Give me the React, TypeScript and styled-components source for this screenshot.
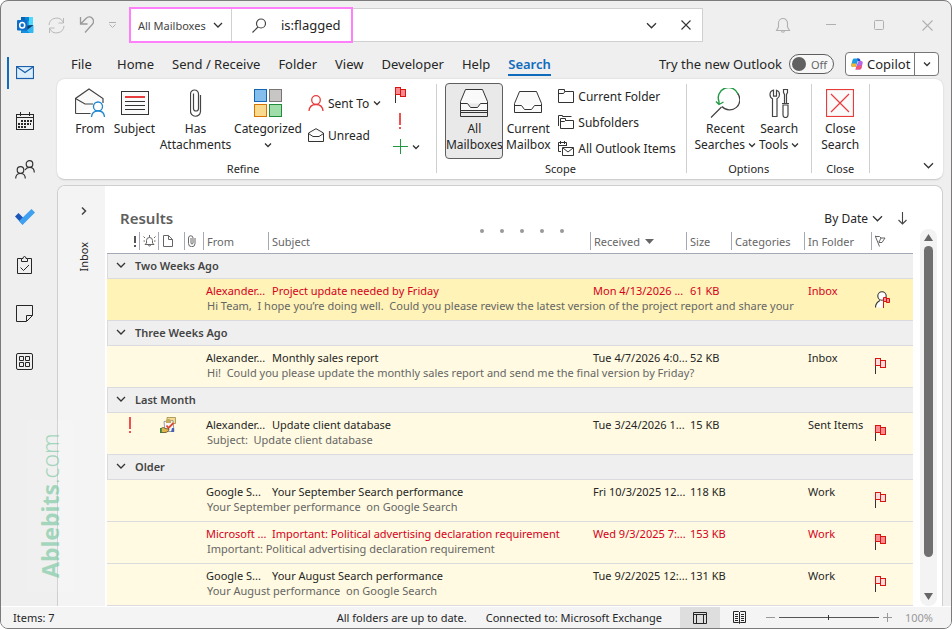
import React from "react";
import styled, { createGlobalStyle } from "styled-components";

const GlobalStyle = createGlobalStyle`
  * { box-sizing: border-box; }
  body {
    margin: 0;
    background: #fff;
    font-family: "Noto Sans", "Open Sans", sans-serif;
    font-size: 12px;
    color: #262626;
  }
  button, input, select { font: inherit; color: inherit; }
  button { background: none; border: 0; padding: 0; cursor: pointer; }
  svg { display: block; flex: none; }
`;

const Window = styled.div`
  position: relative;
  display: flex;
  flex-direction: column;
  min-height: 100vh;
  min-width: 900px;
  background: #efefef;
  border: 1px solid #7d7a7b;
  border-radius: 8px;
  overflow: hidden;
`;

/* ---------- title bar ---------- */

const TitleBar = styled.header`
  display: flex;
  align-items: center;
  height: 48px;
`;

const QuickAccess = styled.div`
  display: flex;
  align-items: center;
  gap: 14px;
  width: 128px;
  padding-left: 16px;
`;

const SearchBar = styled.div`
  flex: 1;
  display: flex;
  align-items: center;
  height: 34px;
  background: #fff;
  border: 1px solid #d0d0d0;
  border-left: 0;
`;

const Highlight = styled.div`
  display: flex;
  flex: none;
  width: 224px;
  height: 36px;
  border: 2px solid #ff80fa;
`;

const ScopePicker = styled.label`
  position: relative;
  display: flex;
  flex: none;
  align-items: center;
  border-right: 1px solid #d0d0d0;
  width: 101px;
  svg { position: absolute; right: 8px; pointer-events: none; }
`;

const ScopeSelect = styled.select`
  appearance: none;
  background: none;
  border: 0;
  outline: 0;
  width: 100%;
  height: 100%;
  padding: 0 0 0 7px;
  font-size: 11px;
  color: #444;
`;

const SearchField = styled.label`
  flex: 1;
  min-width: 0;
  display: flex;
  align-items: center;
  gap: 15px;
  padding-left: 20px;
`;

const SearchInput = styled.input`
  flex: 1;
  min-width: 0;
  border: 0;
  outline: 0;
  padding: 0;
  background: none;
  font-size: 13px;
`;

const SearchActions = styled.div`
  display: flex;
  align-items: center;
  gap: 24px;
  margin-left: auto;
  padding-right: 11px;
`;

const WindowButtons = styled.div`
  display: flex;
  margin-left: 56px;
`;

const WindowButton = styled.button`
  display: grid;
  place-items: center;
  width: 48px;
  height: 32px;
`;

/* ---------- frame ---------- */

const Frame = styled.div`
  flex: 1;
  display: flex;
`;

const Rail = styled.nav`
  display: flex;
  flex-direction: column;
  width: 56px;
  flex: none;
`;

const RailButton = styled.button<{ $active?: boolean }>`
  display: flex;
  align-items: center;
  justify-content: center;
  width: 47px;
  height: 48px;
  position: relative;
  &::before {
    content: "";
    display: ${(p) => (p.$active ? "block" : "none")};
    position: absolute;
    left: 6px;
    top: 8px;
    width: 2px;
    height: 32px;
    background: #0f6cbd;
  }
`;

const Main = styled.div`
  flex: 1;
  min-width: 0;
  display: flex;
  flex-direction: column;
  padding-right: 8px;
`;

/* ---------- tabs ---------- */

const TabRow = styled.div`
  display: flex;
  align-items: center;
  height: 30px;
  padding: 0 4px 0 14px;
`;

const Tabs = styled.nav`
  display: flex;
  gap: 18px;
`;

const Tab = styled.button<{ $active?: boolean }>`
  min-width: 28px;
  height: 24px;
  padding-top: 2px;
  text-align: left;
  font-size: 13px;
  font-weight: ${(p) => (p.$active ? 600 : 400)};
  color: ${(p) => (p.$active ? "#0f6cbd" : "#262626")};
  border-bottom: 2px solid ${(p) => (p.$active ? "#0f6cbd" : "transparent")};
`;

const NewOutlook = styled.label`
  display: flex;
  align-items: center;
  gap: 7px;
  margin-left: auto;
  font-size: 13px;
`;

const Switch = styled.span`
  display: flex;
  align-items: center;
  gap: 5px;
  width: 45px;
  height: 20px;
  padding-left: 2px;
  border: 1px solid #5f5f5f;
  border-radius: 10px;
  background: #f7f7f7;
  font-size: 11px;
  color: #666;
`;

const SwitchInput = styled.input`
  appearance: none;
  margin: 0;
  width: 14px;
  height: 14px;
  border-radius: 50%;
  background: #616161;
`;

const SplitButton = styled.div`
  display: flex;
  height: 24px;
  margin-left: 11px;
  background: #fff;
  border: 1px solid #777;
  border-radius: 4px;
`;

const CopilotButton = styled.button`
  display: flex;
  align-items: center;
  gap: 4px;
  width: 69px;
  padding-left: 5px;
  font-size: 13px;
  border-right: 1px solid #777;
`;

const SplitArrow = styled.button`
  display: grid;
  place-items: center;
  width: 23px;
`;

/* ---------- ribbon ---------- */

const Ribbon = styled.section`
  display: flex;
  padding: 4px 0 2px;
  background: #fff;
  border-radius: 8px;
  border-bottom: 1px solid #cfcfcf;
  box-shadow: 0 0 2px rgba(0, 0, 0, 0.15);
`;

const Group = styled.div<{ $pad: string }>`
  padding: ${(p) => p.$pad};
`;

const GroupBody = styled.div`
  display: flex;
  height: 76px;
`;

const GroupLabel = styled.div`
  margin-top: 2px;
  font-size: 11px;
  line-height: 16px;
  text-align: center;
`;

const Divider = styled.div`
  width: 1px;
  margin: 1px 0 4px;
  background: #cfcfcf;
`;

const BigButton = styled.button<{ $w: number; $pressed?: boolean }>`
  display: flex;
  flex-direction: column;
  align-items: center;
  gap: 3px;
  width: ${(p) => p.$w}px;
  padding-top: 4px;
  font-size: 12px;
  line-height: 16px;
  white-space: nowrap;
  border: 1px solid ${(p) => (p.$pressed ? "#5f5f5f" : "transparent")};
  border-radius: 4px;
  background: ${(p) => (p.$pressed ? "#e9e9e9" : "none")};
`;

const IconBox = styled.span`
  display: grid;
  place-items: center;
  height: 30px;
`;

const LabelLine = styled.span`
  display: flex;
  align-items: center;
  justify-content: center;
  gap: 3px;
`;

const ArrowLine = styled.span`
  display: grid;
  place-items: center;
  height: 16px;
`;

const SmallColumn = styled.div<{ $gap: number; $top?: number }>`
  display: flex;
  flex-direction: column;
  margin-left: ${(p) => p.$gap}px;
  padding-top: ${(p) => p.$top ?? 0}px;
`;

const SmallButton = styled.button<{ $h: number }>`
  display: flex;
  flex: none;
  align-items: center;
  gap: 4px;
  height: ${(p) => p.$h}px;
  font-size: 12px;
  white-space: nowrap;
`;

const MarkBox = styled.span`
  display: flex;
  justify-content: center;
  width: 15px;
`;

const RibbonToggle = styled.button`
  align-self: flex-end;
  margin-left: auto;
  padding: 6px 9px;
`;

/* ---------- results ---------- */

const Card = styled.section`
  flex: 1;
  display: flex;
  margin-top: 5px;
  background: #fff;
  border: 1px solid #cfcfcf;
  border-bottom: 0;
  border-radius: 8px 8px 0 0;
  overflow: hidden;
`;

const FolderStrip = styled.aside`
  display: flex;
  flex-direction: column;
  align-items: center;
  gap: 26px;
  width: 47px;
  padding: 20px 0 0 5px;
  background: #f4f4f4;
`;

const VerticalLabel = styled.span`
  writing-mode: vertical-rl;
  transform: rotate(180deg);
  font-size: 11px;
  line-height: 16px;
`;

const Pane = styled.div`
  position: relative;
  flex: 1;
  min-width: 0;
  display: flex;
  flex-direction: column;
  padding: 21px 5px 0 2px;
`;

const PaneHeader = styled.div`
  display: flex;
  align-items: center;
  height: 22px;
  padding: 0 30px 0 13px;
`;

const Title = styled.h1`
  margin: 0;
  font-size: 15px;
  line-height: 20px;
  font-weight: 600;
  color: #5f5f5f;
`;

const SortBy = styled.button`
  display: flex;
  align-items: center;
  gap: 4px;
  margin-left: auto;
`;

const SortOrder = styled.button`
  margin-left: 15px;
`;

const Dots = styled.div`
  position: absolute;
  top: 43px;
  left: 0;
  right: 4px;
  display: flex;
  justify-content: center;
  gap: 16px;
`;

const Dot = styled.span`
  width: 4px;
  height: 4px;
  border-radius: 50%;
  background: #999;
`;

const PaneBody = styled.div`
  flex: 1;
  display: flex;
  gap: 7px;
`;

const TableWrap = styled.div`
  flex: 1;
  min-width: 0;
  padding-top: 3px;
`;

const Table = styled.table`
  width: 100%;
  table-layout: fixed;
  border-collapse: separate;
  border-spacing: 0;
  font-size: 11px;
  line-height: 15px;
`;

const Col = styled.col<{ $w?: number }>`
  width: ${(p) => (p.$w ? p.$w + "px" : "auto")};
`;

const HeadCell = styled.th`
  height: 22px;
  padding: 0 0 3px;
  font-weight: 400;
  text-align: left;
  color: #666;
  border-bottom: 1px solid #a5a8b5;
`;

const HeadInner = styled.div<{ $first?: boolean }>`
  display: flex;
  align-items: center;
  justify-content: ${(p) => (p.$first ? "flex-end" : "flex-start")};
  gap: 5px;
  height: 18px;
  padding: 0 3px;
  white-space: nowrap;
  border-left: 1px solid ${(p) => (p.$first ? "transparent" : "#a5a8b5")};
`;

const Inset = styled.span`
  padding-left: 1px;
`;

const GroupCell = styled.th`
  height: 25px;
  padding: 0 0 2px 8px;
  text-align: left;
  font-weight: 600;
  color: #444;
  background: #efefef;
  border-left: 1px solid #dadbdf;
  border-bottom: 1px solid #dadbdf;
`;

const GroupTitle = styled.button`
  display: flex;
  align-items: center;
  gap: 9px;
  font-weight: 600;
`;

const TopRow = styled.tr<{ $tone: Tone }>`
  background: ${(p) => (p.$tone === "selected" ? "#fff3b7" : "#fffae1")};
  color: ${(p) => (p.$tone === "normal" ? "#262626" : "#d6001c")};
`;

const PreviewRow = styled.tr<{ $tone: Tone }>`
  background: ${(p) => (p.$tone === "selected" ? "#fff3b7" : "#fffae1")};
  color: #666;
`;

const Cell = styled.td<{ $indent?: boolean }>`
  height: 19px;
  padding: 4px 0 0 ${(p) => (p.$indent ? 4 : 3)}px;
  white-space: nowrap;
`;

const IconCell = styled.td`
  padding: 4px 0 0 2px;
  vertical-align: top;
  border-bottom: 1px solid #dadbdf;
`;

const FlagCell = styled.td`
  padding: 0 0 1px 4px;
  vertical-align: middle;
  border-bottom: 1px solid #dadbdf;
`;

const PreviewCell = styled.td`
  height: 23px;
  padding: 0 0 7px 4px;
  white-space: pre;
  border-bottom: 1px solid #dadbdf;
`;

const ImportantMark = styled.div`
  padding-left: 20px;
`;

const ScrollTrack = styled.div`
  display: flex;
  flex-direction: column;
  align-items: center;
  width: 17px;
  padding: 5px 0;
  border-radius: 8px;
  background: #f3f3f3;
`;

const ScrollThumb = styled.div`
  flex: 312;
  width: 9px;
  margin-top: 4px;
  border-radius: 5px;
  background: #707070;
`;

const ScrollSpace = styled.div`
  flex: 36;
`;

/* ---------- status bar ---------- */

const StatusBar = styled.footer`
  display: flex;
  align-items: center;
  height: 22px;
  padding: 0 18px 0 12px;
  background: #f4f4f4;
  border-top: 1px solid #fff;
  font-size: 11px;
`;

const StatusText = styled.span<{ $gap: number }>`
  margin-right: ${(p) => p.$gap}px;
`;

const Spacer = styled.div`
  flex: 1;
`;

const ViewButton = styled.button<{ $active?: boolean }>`
  display: grid;
  place-items: center;
  width: 40px;
  height: 21px;
  background: ${(p) => (p.$active ? "#dedede" : "none")};
`;

const ZoomControl = styled.div`
  display: flex;
  align-items: center;
  gap: 4px;
  margin-left: 6px;
  color: #999;
`;

const ZoomRange = styled.input`
  appearance: none;
  width: 100px;
  height: 9px;
  margin: 0;
  background: linear-gradient(#555, #555) center / 100% 1px no-repeat;
  &::-webkit-slider-thumb {
    appearance: none;
    width: 1px;
    height: 5px;
    background: #333;
  }
`;

const ZoomValue = styled.span`
  margin-left: 9px;
`;

/* ---------- watermark ---------- */

const Watermark = styled.div`
  position: absolute;
  left: 26px;
  bottom: 36px;
  width: 46px;
  height: 172px;
  display: flex;
  align-items: center;
  justify-content: center;
  writing-mode: vertical-rl;
  transform: rotate(180deg);
  background: rgba(255, 255, 255, 0.1);
  color: rgba(110, 196, 154, 0.6);
  font-size: 23px;
  font-weight: 300;
  pointer-events: none;
`;

const WatermarkBold = styled.b`
  font-weight: 700;
`;

/* ---------- icons ---------- */

const Svg = ({ w, h, s = "#444", children }: { w: number; h: number; s?: string; children: React.ReactNode }) => (
  <svg width={w} height={h} viewBox={`0 0 ${w} ${h}`} fill="none" stroke={s} aria-hidden="true">
    {children}
  </svg>
);

const Chevron = ({ w = 10, color = "#333" }: { w?: number; color?: string }) => (
  <Svg w={w} h={w} s={color}>
    <path d={`M1 ${w / 2 - (w - 2) / 4}l${(w - 2) / 2} ${(w - 2) / 2} ${(w - 2) / 2}-${(w - 2) / 2}`} strokeWidth="1.3" />
  </Svg>
);

const OutlookLogo = () => (
  <Svg w={17} h={17} s="none">
    <path d="M4 0h12v9H4z" fill="#28a8ea" />
    <path d="M4 0h4v4H4z" fill="#0364b8" />
    <path d="M8 0h4v4H8z" fill="#0a84d4" />
    <path d="M12 0h4v8h-4z" fill="#50d9ff" />
    <path d="M4 9l12-1v8H4z" fill="#123b6d" />
    <path d="M16.500 8v7a1 1 0 0 1-1 1H6z" fill="#35b8f1" />
    <path d="M4 9l9 7H5a1 1 0 0 1-1-1z" fill="#1490df" />
    <rect y="3" width="10.500" height="10.500" rx="1" fill="#0f6fc8" />
    <ellipse cx="5.200" cy="8.300" rx="2.500" ry="2.800" stroke="#fff" strokeWidth="1.500" />
  </Svg>
);

const SyncIcon = () => (
  <Svg w={17} h={17} s="#b8b8b8">
    <path d="M1 8a7.500 7.500 0 0 1 14.300-2.500M16 9a7.500 7.500 0 0 1-14.300 2.500" />
    <path d="M15.500 1v5h-5M1.500 16v-5h5" />
  </Svg>
);

const UndoIcon = () => (
  <Svg w={15} h={18} s="#999">
    <path d="M1.500 1v7h7M1.500 8L7 2.500c2-2 4.500-2 6.200-.3 1.800 1.800 1.800 4.500 0 6.300L6 16.500" strokeWidth="1.300" />
  </Svg>
);

const OverflowIcon = () => (
  <Svg w={9} h={8} s="#b0b0b0">
    <path d="M1 1.500h7M1.500 3.500l3 3 3-3" />
  </Svg>
);

const SearchIcon = () => (
  <Svg w={14} h={15}>
    <circle cx="9" cy="5.500" r="4.500" strokeWidth="1.200" />
    <path d="M6 9L.500 14.500" strokeWidth="1.200" />
  </Svg>
);

const CloseIcon = ({ w = 10, color = "#333" }: { w?: number; color?: string }) => (
  <Svg w={w} h={w} s={color}>
    <path d={`M.5 .5L${w - 0.5} ${w - 0.5}M${w - 0.5} .5L.5 ${w - 0.5}`} strokeWidth="1.100" />
  </Svg>
);

const BellIcon = () => (
  <Svg w={16} h={17} s="#b0b0b0">
    <path d="M3.500 10V6a4.500 4.500 0 0 1 9 0v4l2 3.500h-13zM6.500 13.500a1.500 1.800 0 0 0 3 0" strokeWidth="1.100" />
  </Svg>
);

const MinimizeIcon = () => (
  <Svg w={10} h={10} s="#b0b0b0"><path d="M0 4.500h10" /></Svg>
);

const MaximizeIcon = () => (
  <Svg w={10} h={10} s="#b0b0b0"><rect x=".5" y=".5" width="9" height="9" rx="1" /></Svg>
);

const MailIcon = () => (
  <Svg w={18} h={14} s="#1a5fa8">
    <rect x=".5" y=".5" width="17" height="12" fill="#dcedfb" strokeWidth="1.200" />
    <path d="M1 1l8 5.500L17 1" strokeWidth="1.200" />
  </Svg>
);

const CalendarIcon = () => (
  <Svg w={18} h={18} s="#262626">
    <rect x=".5" y="2.500" width="17" height="15" />
    <path d="M0 5.500h18M4.500 0v4M13.500 0v4" />
    <path d="M5 9h11M2 12h13M2 15h8" strokeWidth="2" strokeDasharray="2 1" />
  </Svg>
);

const PeopleIcon = () => (
  <Svg w={20} h={19} s="#333">
    <circle cx="5.500" cy="10" r="3.300" strokeWidth="1.200" />
    <path d="M.7 18.500c0-3 2-5 4.800-5s4.800 2 4.800 5" strokeWidth="1.200" />
    <circle cx="14.500" cy="4" r="3.300" strokeWidth="1.200" />
    <path d="M10 10c1-1.700 2.600-2.600 4.500-2.600 2.800 0 4.800 2 4.800 5" strokeWidth="1.200" />
  </Svg>
);

const TodoIcon = () => (
  <Svg w={20} h={16} s="none">
    <path d="M0 7.500L3.500 4 11 11.500 7.500 15.500z" fill="#1b56b8" />
    <path d="M4 12L16.500 0 20 3.500 7.500 16z" fill="#3fa0f0" />
  </Svg>
);

const ClipboardIcon = () => (
  <Svg w={15} h={18} s="#262626">
    <path d="M4.500 2.500h-4v15h14v-15h-4" />
    <path d="M4.500 5.500v-3h1.500a1.500 2 0 0 1 3 0h1.500v3zM3.500 11.500l3 3 5.500-5.500" />
  </Svg>
);

const NoteIcon = () => (
  <Svg w={17} h={17} s="#262626">
    <path d="M.5.5h16v10l-6 6H.500zM10.500 16v-5.500h6" />
  </Svg>
);

const AppsIcon = () => (
  <Svg w={17} h={17} s="#262626">
    <rect x=".5" y=".5" width="16" height="16" rx="1.500" />
    <path d="M3.500 3.500h4v4h-4zM9.500 3.500h4v4h-4zM3.500 9.500h4v4h-4zM9.500 9.500h4v4h-4z" />
  </Svg>
);

const CopilotLogo = () => (
  <svg width="12" height="12" viewBox="0 0 12 12" aria-hidden="true">
    <path d="M3.500.5h4L6 5.500 4.500 9H2C.500 9 0 8 .4 6.500l1-4C1.800 1 2.500.5 3.500.5z" fill="#1c9be0" />
    <path d="M.3 5.500h5L4.500 9H2C.500 9 0 8 .3 5.500z" fill="#f4b731" />
    <path d="M6 .5h1.500c1 0 1.500.7 1.800 1.700L9.500 3H7z" fill="#1c4bc4" />
    <path d="M8.500 11.500h-4L6 6.500 7.500 3H10c1.500 0 2 1 1.600 2.500l-1 4c-.4 1.500-1.100 2-2.100 2z" fill="#b565e6" />
    <path d="M11 7.500H5.700L4.500 11.500h4c1 0 1.700-.5 2.100-2z" fill="#f2577a" />
  </svg>
);

const FromIcon = () => (
  <Svg w={30} h={30} s="#444">
    <path d="M.5 25.500v-15L14 1l14 9.500V15M.5 25.500h15" strokeWidth="1.200" fill="#fafafa" />
    <path d="M.5 10.500l9.500 5.500h8" strokeWidth="1.200" />
    <circle cx="23" cy="18.500" r="4.500" stroke="#1f87cf" strokeWidth="1.300" fill="#fff" />
    <path d="M16.500 29c.3-3.700 2.700-6 6.500-6s6.200 2.300 6.500 6" stroke="#1f87cf" strokeWidth="1.300" fill="#fff" />
  </Svg>
);

const SubjectIcon = () => (
  <Svg w={28} h={28} s="#333">
    <rect x=".5" y="2.500" width="27" height="23" fill="#fafafa" />
    <path d="M4 8h20" stroke="#e83c3c" strokeWidth="2" />
    <path d="M4 12.500h20M4 16.500h20M4 20.500h20" />
  </Svg>
);

const ClipIcon = () => (
  <Svg w={12} h={29} s="#444">
    <path d="M8.500 6v13.500a2 2 0 0 1-5 0M3.500 20V4.500M8.500 6V5a4 4 0 0 0-8 0v17a5 5 0 0 0 10 .5V6M3.500 5v-.500" strokeWidth="1.200" />
  </Svg>
);

const CategoriesIcon = () => (
  <Svg w={28} h={28}>
    <rect x=".5" y=".5" width="12" height="12" fill="#83beec" stroke="#1464b4" />
    <rect x="15.500" y=".5" width="12" height="12" fill="#c8c6c4" stroke="#7a7574" />
    <rect x=".5" y="15.500" width="12" height="12" fill="#f8db8f" stroke="#d87300" />
    <rect x="15.500" y="15.500" width="12" height="12" fill="#a1dda8" stroke="#1f8b3b" />
  </Svg>
);

const PersonIcon = () => (
  <Svg w={16} h={16} s="#e83c3c">
    <circle cx="8" cy="5" r="4.300" strokeWidth="1.300" />
    <path d="M1 16c.3-4 3-6.500 7-6.500s6.700 2.500 7 6.500" strokeWidth="1.300" />
  </Svg>
);

const UnreadIcon = () => (
  <Svg w={16} h={14} s="#333">
    <path d="M.5 13.500v-8.500L8 .7 15.500 5v8.500zM.5 5.500l4.500 3h6l4.500-3" fill="#fafafa" />
  </Svg>
);

const FlagIcon = ({ strong = true }: { strong?: boolean }) => (
  <Svg w={11} h={16} s="#d9150f">
    <path d="M.5 7v9" stroke="#333" />
    <rect x="5.500" y="2.500" width="5" height="7" fill={strong ? "#f98b90" : "#fbdcdc"} />
    <rect x=".5" y=".5" width="5" height="7" fill={strong ? "#f98b90" : "#fbdcdc"} />
  </Svg>
);

const ImportanceIcon = () => (
  <Svg w={3} h={16} s="#f05050">
    <path d="M1 0v12M1 14v2" strokeWidth="2" />
  </Svg>
);

const PlusIcon = () => (
  <Svg w={15} h={15} s="#1f9a43"><path d="M0 7.500h15M7.500 0v15" /></Svg>
);

const TrayIcon = ({ stacked = false }: { stacked?: boolean }) => (
  <Svg w={28} h={28} s="#333">
    <path d="M.5 23.500v-9L5.500 2.500h17l5 12v9zM.5 16.500h7l3 4h7l3-4h7" fill="#fafafa" transform={stacked ? "translate(0 -2)" : undefined} />
    {stacked && <path d="M.5 21v6.500h27V21M.5 23.500h27" />}
  </Svg>
);

const FolderIcon = () => (
  <Svg w={16} h={14} s="#333"><path d="M.5.5h6v2h9v11H.500zM.5 4.500h5l1.500-2" /></Svg>
);

const SubfoldersIcon = () => (
  <Svg w={16} h={14} s="#333">
    <path d="M.5 11V.5h4v1h9M2.500 3.500h5v2h8v8h-13zM2.500 6.500h4l1-1" />
  </Svg>
);

const ItemsIcon = () => (
  <Svg w={16} h={15} s="#333">
    <path d="M2.500 0v3M6.500 0v3M8.500 5V1.500h-8v9H3M.5 4.500h8" />
    <path d="M4.500 6.500h11v8h-11zM5 7l5 4 5-4" fill="#fff" />
  </Svg>
);

const RecentIcon = () => (
  <Svg w={30} h={30} s="#444">
    <path d="M27.300 5A10 10 0 1 1 12 18.500M11.500 19L1 29.500" strokeWidth="1.200" />
    <path d="M28 6A10 10 0 0 0 9 13.500V16M6 13.500l3 3 4.500-2.500" stroke="#1f9a43" strokeWidth="1.400" />
  </Svg>
);

const ToolsIcon = () => (
  <Svg w={20} h={29} s="#444">
    <path d="M4.500 1.200v6h3v-6c2 .6 3 2.300 3 4.300 0 2.300-1.200 3.500-2.500 4.200v17.800H3.500V9.700C2 9 1 7.800 1 5.500c0-2 1.300-3.700 3.500-4.300z" strokeWidth="1.200" />
    <path d="M14.500.5h4v3l-1 2v9h-2v-9l-1-2zM13 14.500h7M14 16v10a2.500 2.500 0 0 0 5 0V16z" strokeWidth="1.200" />
  </Svg>
);

const CloseSearchIcon = () => (
  <Svg w={28} h={28} s="#e83c3c">
    <rect x=".5" y=".5" width="27" height="27" fill="#fafafa" strokeWidth="1.200" />
    <path d="M5 5l18 18M23 5L5 23" strokeWidth="1.200" />
  </Svg>
);

const ReminderIcon = () => (
  <Svg w={13} h={12} s="#666">
    <path d="M3.500 8V5.500a3 3 0 0 1 6 0V8l1.500 1.500H2zM5.500 10a1 1 0 0 0 2 0M6.500 0v2.500M2 3L.500 1.500M11 3l1.500-1.500M2 6H.500M11 6h1.500" />
  </Svg>
);

const PageIcon = () => (
  <Svg w={10} h={12} s="#666"><path d="M.5.5h5l4 4v7H.500zM5.500.5v4h4" /></Svg>
);

const SmallClip = () => (
  <Svg w={8} h={12} s="#666">
    <path d="M3 3v5a1 1 0 0 0 2 0V3a2.200 2.200 0 0 0-4.500 0v5.500a3 3 0 0 0 6.500 0V3" />
  </Svg>
);

const HeaderFlag = () => (
  <Svg w={11} h={12} s="#666"><path d="M0 .5L4.500 11.500M.5 1.500h4l1.500 1.500h4L7 7.500H4L3 6.500M6 3L4 7" /></Svg>
);

const TaskIcon = () => (
  <Svg w={16} h={16} s="none">
    <path d="M7 .5h8.500v6H7z" fill="#f1dc93" stroke="#a08a48" strokeWidth=".8" />
    <path d="M4 4.500l9-1 1 11H5z" fill="#f6f6fb" stroke="#85858f" strokeWidth=".8" />
    <path d="M6 3.500c1-2 4-2 5 0v2.500H6z" fill="#c5aa58" />
    <path d="M6.500 8.500l2 2.500 5-5" stroke="#e0482c" strokeWidth="1.800" />
    <path d="M1 11.500c2-1.500 3-1 4 0l4 .5c0 2-2 3.500-4 3.500H1z" fill="#e2b64d" stroke="#5a4920" strokeWidth=".8" />
    <path d="M0 11h1.500v5H0z" fill="#2b8a46" />
    <path d="M12 11h2v4h-3z" fill="#4563b4" />
  </Svg>
);

const PersonFlag = () => (
  <Svg w={16} h={17} s="#333">
    <path d="M.5 16.500c0-3 1.500-5.500 4.500-7h4v7z" fill="#fff" stroke="none" />
    <circle cx="7" cy="5" r="4.200" fill="#fff" strokeWidth="1.100" />
    <path d="M.5 16.500c0-3 1.500-5.500 4.500-7" strokeWidth="1.100" />
    <path d="M8.500 7v10" stroke="#d9150f" />
    <path d="M8.500 6.500h3v4h-3zM11.500 7.500h3v4h-3z" fill="#f98b90" stroke="#d9150f" />
  </Svg>
);

/* ---------- data ---------- */

type Tone = "selected" | "overdue" | "normal";

interface Message {
  from: string;
  subject: string;
  preview: string;
  received: string;
  size: string;
  folder: string;
  tone: Tone;
  flag: "person" | "strong" | "light";
  important?: boolean;
}

const groups: { title: string; messages: Message[] }[] = [
  {
    title: "Two Weeks Ago",
    messages: [
      {
        from: "Alexander...", subject: "Project update needed by Friday",
        preview: "Hi Team,  I hope you’re doing well.  Could you please review the latest version of the project report and share your",
        received: "Mon 4/13/2026 ...", size: "61 KB", folder: "Inbox", tone: "selected", flag: "person",
      },
    ],
  },
  {
    title: "Three Weeks Ago",
    messages: [
      {
        from: "Alexander...", subject: "Monthly sales report",
        preview: "Hi!  Could you please update the monthly sales report and send me the final version by Friday?",
        received: "Tue 4/7/2026 4:0...", size: "52 KB", folder: "Inbox", tone: "normal", flag: "light",
      },
    ],
  },
  {
    title: "Last Month",
    messages: [
      {
        from: "Alexander...", subject: "Update client database",
        preview: "Subject:  Update client database",
        received: "Tue 3/24/2026 1...", size: "15 KB", folder: "Sent Items", tone: "normal", flag: "strong", important: true,
      },
    ],
  },
  {
    title: "Older",
    messages: [
      {
        from: "Google S...", subject: "Your September Search performance",
        preview: "Your September performance  on Google Search",
        received: "Fri 10/3/2025 12...", size: "118 KB", folder: "Work", tone: "normal", flag: "light",
      },
      {
        from: "Microsoft ...", subject: "Important: Political advertising declaration requirement",
        preview: "Important: Political advertising declaration requirement",
        received: "Wed 9/3/2025 7:...", size: "153 KB", folder: "Work", tone: "overdue", flag: "strong",
      },
      {
        from: "Google S...", subject: "Your August Search performance",
        preview: "Your August performance  on Google Search",
        received: "Tue 9/2/2025 12:...", size: "131 KB", folder: "Work", tone: "normal", flag: "light",
      },
    ],
  },
];

const tabs = ["File", "Home", "Send / Receive", "Folder", "View", "Developer", "Help", "Search"];

const railItems: [string, React.ReactNode][] = [
  ["Mail", <MailIcon />],
  ["Calendar", <CalendarIcon />],
  ["People", <PeopleIcon />],
  ["To Do", <TodoIcon />],
  ["Tasks", <ClipboardIcon />],
  ["Notes", <NoteIcon />],
  ["More apps", <AppsIcon />],
];

/* ---------- sections ---------- */

interface BigProps {
  w: number;
  icon: React.ReactNode;
  lines: string[];
  arrow?: boolean;
  pressed?: boolean;
}

const Big = ({ w, icon, lines, arrow, pressed }: BigProps) => (
  <BigButton $w={w} $pressed={pressed} aria-pressed={pressed}>
    <IconBox>{icon}</IconBox>
    <span>
      {lines.map((line, i) => (
        <LabelLine key={line}>
          {line}
          {arrow && i === 1 && <Chevron w={8} />}
        </LabelLine>
      ))}
      {arrow && lines.length === 1 && <ArrowLine><Chevron w={8} /></ArrowLine>}
    </span>
  </BigButton>
);

const MessageRows = ({ m }: { m: Message }) => (
  <>
    <TopRow $tone={m.tone}>
      <IconCell rowSpan={2} colSpan={2}>
        {m.important && <ImportantMark><ImportanceIcon /></ImportantMark>}
      </IconCell>
      <IconCell rowSpan={2} colSpan={2}>{m.important && <TaskIcon />}</IconCell>
      <Cell>{m.from}</Cell>
      <Cell $indent>{m.subject}</Cell>
      <Cell>{m.received}</Cell>
      <Cell $indent>{m.size}</Cell>
      <Cell />
      <Cell $indent>{m.folder}</Cell>
      <FlagCell rowSpan={2}>
        {m.flag === "person" ? <PersonFlag /> : <FlagIcon strong={m.flag === "strong"} />}
      </FlagCell>
    </TopRow>
    <PreviewRow $tone={m.tone}>
      <PreviewCell colSpan={6}>{m.preview}</PreviewCell>
    </PreviewRow>
  </>
);

const Results = () => (
  <Pane>
    <PaneHeader>
      <Title>Results</Title>
      <SortBy>By Date <Chevron w={11} /></SortBy>
      <SortOrder aria-label="Reverse order">
        <Svg w={9} h={13}><path d="M4.500 0v12M.5 8l4 4 4-4" strokeWidth="1.100" /></Svg>
      </SortOrder>
    </PaneHeader>
    <Dots>{[0, 1, 2, 3, 4].map((n) => <Dot key={n} />)}</Dots>
    <PaneBody>
      <TableWrap>
        <Table>
          <colgroup>
            <Col $w={32} /><Col $w={19} /><Col $w={26} /><Col $w={19} /><Col $w={65} /><Col />
            <Col $w={96} /><Col $w={45} /><Col $w={73} /><Col $w={67} /><Col $w={42} />
          </colgroup>
          <thead>
            <tr>
              <HeadCell aria-label="Importance">
                <HeadInner $first><Svg w={2} h={11} s="#555"><path d="M1 0v7M1 9v2" strokeWidth="2" /></Svg></HeadInner>
              </HeadCell>
              <HeadCell aria-label="Reminder"><HeadInner><ReminderIcon /></HeadInner></HeadCell>
              <HeadCell aria-label="Icon"><HeadInner><Inset><PageIcon /></Inset></HeadInner></HeadCell>
              <HeadCell aria-label="Attachment"><HeadInner><SmallClip /></HeadInner></HeadCell>
              <HeadCell><HeadInner>From</HeadInner></HeadCell>
              <HeadCell><HeadInner>Subject</HeadInner></HeadCell>
              <HeadCell>
                <HeadInner>
                  Received
                  <Svg w={9} h={5} s="none"><path d="M0 0h9L4.500 5z" fill="#666" /></Svg>
                </HeadInner>
              </HeadCell>
              <HeadCell><HeadInner>Size</HeadInner></HeadCell>
              <HeadCell><HeadInner>Categories</HeadInner></HeadCell>
              <HeadCell><HeadInner>In Folder</HeadInner></HeadCell>
              <HeadCell aria-label="Flag"><HeadInner><HeaderFlag /></HeadInner></HeadCell>
            </tr>
          </thead>
          <tbody>
            {groups.map((g) => (
              <React.Fragment key={g.title}>
                <tr>
                  <GroupCell colSpan={11}>
                    <GroupTitle><Chevron w={10} />{g.title}</GroupTitle>
                  </GroupCell>
                </tr>
                {g.messages.map((m) => <MessageRows key={m.received} m={m} />)}
              </React.Fragment>
            ))}
          </tbody>
        </Table>
      </TableWrap>
      <ScrollTrack aria-hidden="true">
        <Svg w={9} h={8} s="none"><path d="M4.500 0L9 7H0z" fill="#666" /></Svg>
        <ScrollThumb />
        <ScrollSpace />
        <Svg w={9} h={8} s="none"><path d="M4.500 7L9 0H0z" fill="#666" /></Svg>
      </ScrollTrack>
    </PaneBody>
  </Pane>
);

const RibbonBar = () => (
  <Ribbon>
    <Group $pad="0 16px 0 9px">
      <GroupBody>
        <Big w={48} icon={<FromIcon />} lines={["From"]} />
        <Big w={41} icon={<SubjectIcon />} lines={["Subject"]} />
        <Big w={81} icon={<ClipIcon />} lines={["Has", "Attachments"]} />
        <Big w={64} icon={<CategoriesIcon />} lines={["Categorized"]} arrow />
        <SmallColumn $gap={8} $top={4}>
          <SmallButton $h={32}><PersonIcon />Sent To <Chevron w={8} /></SmallButton>
          <SmallButton $h={32}><UnreadIcon />Unread</SmallButton>
        </SmallColumn>
        <SmallColumn $gap={12}>
          <SmallButton $h={24} aria-label="Flagged"><MarkBox><FlagIcon /></MarkBox></SmallButton>
          <SmallButton $h={28} aria-label="Important"><MarkBox><ImportanceIcon /></MarkBox></SmallButton>
          <SmallButton $h={23} aria-label="More"><MarkBox><PlusIcon /></MarkBox><Chevron w={8} /></SmallButton>
        </SmallColumn>
      </GroupBody>
      <GroupLabel>Refine</GroupLabel>
    </Group>
    <Divider />
    <Group $pad="0 10px 0 8px">
      <GroupBody>
        <Big w={58} icon={<TrayIcon stacked />} lines={["All", "Mailboxes"]} pressed />
        <Big w={50} icon={<TrayIcon />} lines={["Current", "Mailbox"]} />
        <SmallColumn $gap={5}>
          <SmallButton $h={26}><FolderIcon />Current Folder</SmallButton>
          <SmallButton $h={26}><SubfoldersIcon />Subfolders</SmallButton>
          <SmallButton $h={26}><ItemsIcon />All Outlook Items</SmallButton>
        </SmallColumn>
      </GroupBody>
      <GroupLabel>Scope</GroupLabel>
    </Group>
    <Divider />
    <Group $pad="0 8px">
      <GroupBody>
        <Big w={61} icon={<RecentIcon />} lines={["Recent", "Searches"]} arrow />
        <Big w={47} icon={<ToolsIcon />} lines={["Search", "Tools"]} arrow />
      </GroupBody>
      <GroupLabel>Options</GroupLabel>
    </Group>
    <Divider />
    <Group $pad="0 8px">
      <GroupBody>
        <Big w={41} icon={<CloseSearchIcon />} lines={["Close", "Search"]} />
      </GroupBody>
      <GroupLabel>Close</GroupLabel>
    </Group>
    <Divider />
    <RibbonToggle aria-label="Collapse ribbon"><Chevron w={11} /></RibbonToggle>
  </Ribbon>
);

export default function App() {
  return (
    <Window>
      <GlobalStyle />
      <TitleBar>
        <QuickAccess>
          <OutlookLogo />
          <button aria-label="Sync"><SyncIcon /></button>
          <button aria-label="Undo"><UndoIcon /></button>
          <button aria-label="Customize"><OverflowIcon /></button>
        </QuickAccess>
        <SearchBar>
          <Highlight>
            <ScopePicker>
              <ScopeSelect aria-label="Search scope">
                <option>All Mailboxes</option>
              </ScopeSelect>
              <Chevron w={10} />
            </ScopePicker>
            <SearchField>
              <SearchIcon />
              <SearchInput aria-label="Search" defaultValue="is:flagged" />
            </SearchField>
          </Highlight>
          <SearchActions>
            <button aria-label="Search options"><Chevron w={11} /></button>
            <button aria-label="Clear search"><CloseIcon /></button>
          </SearchActions>
        </SearchBar>
        <WindowButtons>
          <WindowButton aria-label="Notifications"><BellIcon /></WindowButton>
          <WindowButton aria-label="Minimize"><MinimizeIcon /></WindowButton>
          <WindowButton aria-label="Maximize"><MaximizeIcon /></WindowButton>
          <WindowButton aria-label="Close"><CloseIcon w={11} color="#b0b0b0" /></WindowButton>
        </WindowButtons>
      </TitleBar>
      <Frame>
        <Rail>
          {railItems.map(([label, icon], i) => (
            <RailButton key={label} aria-label={label} $active={i === 0}>{icon}</RailButton>
          ))}
        </Rail>
        <Main>
          <TabRow>
            <Tabs>
              {tabs.map((t) => <Tab key={t} $active={t === "Search"}>{t}</Tab>)}
            </Tabs>
            <NewOutlook>
              Try the new Outlook
              <Switch><SwitchInput type="checkbox" role="switch" />Off</Switch>
            </NewOutlook>
            <SplitButton>
              <CopilotButton><CopilotLogo />Copilot</CopilotButton>
              <SplitArrow aria-label="Copilot options"><Chevron w={8} /></SplitArrow>
            </SplitButton>
          </TabRow>
          <RibbonBar />
          <Card>
            <FolderStrip>
              <button aria-label="Expand folder pane">
                <Svg w={8} h={10}><path d="M2 1.500L5.500 5 2 8.500" strokeWidth="1.500" /></Svg>
              </button>
              <VerticalLabel>Inbox</VerticalLabel>
            </FolderStrip>
            <Results />
          </Card>
        </Main>
      </Frame>
      <StatusBar>
        <span>Items: 7</span>
        <Spacer />
        <StatusText $gap={19}>All folders are up to date.</StatusText>
        <StatusText $gap={18}>Connected to: Microsoft Exchange</StatusText>
        <ViewButton $active aria-label="Normal view">
          <Svg w={14} h={12} s="#262626"><path d="M.5.5h13v11H.500zM0 2.500h14M3.500 2.500v9M10.500 2.500v9" /></Svg>
        </ViewButton>
        <ViewButton aria-label="Reading view">
          <Svg w={13} h={13} s="#262626">
            <path d="M.5 .5h5l1 1 1-1h5v11h-5l-1 1-1-1h-5zM6.500 1v11M2 3.500h3M2 5.500h3M2 7.500h3M2 9.500h3M8 3.500h3M8 5.500h3M8 7.500h3M8 9.500h3" />
          </Svg>
        </ViewButton>
        <ZoomControl>
          <button aria-label="Zoom out"><Svg w={9} h={9} s="#999"><path d="M0 4.500h9" /></Svg></button>
          <ZoomRange type="range" aria-label="Zoom" min="10" max="190" defaultValue="100" />
          <button aria-label="Zoom in"><Svg w={9} h={9} s="#999"><path d="M0 4.500h9M4.500 0v9" /></Svg></button>
          <ZoomValue>100%</ZoomValue>
        </ZoomControl>
      </StatusBar>
      <Watermark><span><WatermarkBold>Ablebits</WatermarkBold>.com</span></Watermark>
    </Window>
  );
}
